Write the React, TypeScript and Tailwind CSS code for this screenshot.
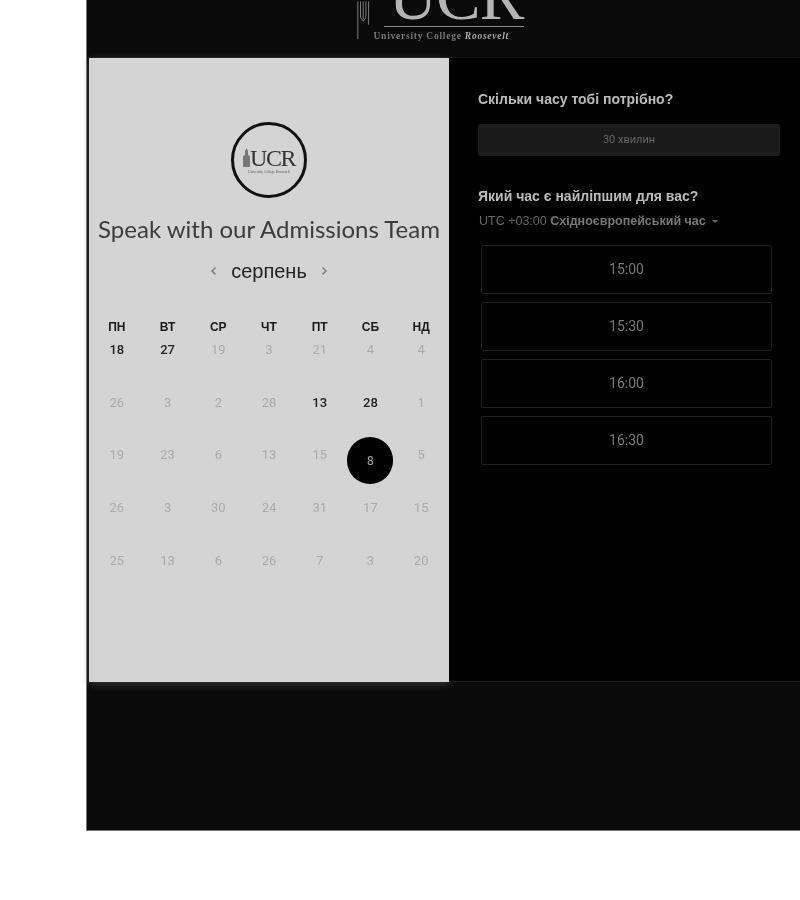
const days: [string, boolean][][] = [
  [["18", true], ["27", true], ["19", false], ["3", false], ["21", false], ["4", false], ["4", false]],
  [["26", false], ["3", false], ["2", false], ["28", false], ["13", true], ["28", true], ["1", false]],
  [["19", false], ["23", false], ["6", false], ["13", false], ["15", false], ["8", false], ["5", false]],
  [["26", false], ["3", false], ["30", false], ["24", false], ["31", false], ["17", false], ["15", false]],
  [["25", false], ["13", false], ["6", false], ["26", false], ["7", false], ["3", false], ["20", false]],
];
const heads = ["ПН", "ВТ", "СР", "ЧТ", "ПТ", "СБ", "НД"];
const times = ["15:00", "15:30", "16:00", "16:30"];

function Tower({ className }: { className: string }) {
  return (
    <svg className={className} viewBox="0 0 20 46" fill="none" stroke="#8a8a8a" strokeWidth="1">
      <path d="M2 0V42M5 0V18M8 0V20M11 0V18M14 0V14M5 18L8 22L11 18M14 14V26" />
    </svg>
  );
}

export default function App() {
  return (
    <div className="h-[900px] w-[800px] overflow-hidden bg-white font-['Liberation_Sans',sans-serif]">
      <div className="ml-[86px] flex h-[831px] w-[714px] flex-col border-b border-l border-[#777] bg-[#0a0a0a] blur-[0.3px]">
        <header className="flex h-[58px] shrink-0 justify-center overflow-hidden border-b border-[#141414]">
          <div className="ml-[-6px] flex h-[44px] w-[170px] shrink-0 items-start">
            <Tower className="mt-0 h-[44px] w-[18px] shrink-0" />
            <div className="flex min-w-0 flex-col">
              <div className="ml-[10px] mt-[-34px] h-[61px] w-[140px] border-b border-[#8a8a8a] text-right font-['Liberation_Serif',serif] text-[67px] leading-[61px] tracking-[-1px] text-[#b4b4b4]">
                UCR
              </div>
              <div className="mt-[3px] whitespace-nowrap font-['Liberation_Serif',serif] text-[9.5px] font-bold leading-[12px] tracking-[0.75px] text-[#777]">
                University College <span className="italic text-[#aaa]">Roosevelt</span>
              </div>
            </div>
          </div>
        </header>
        <main className="flex h-[624px] shrink-0">
          <section className="ml-[2px] flex w-[360px] shrink-0 flex-col items-center bg-[#d4d4d4] shadow-[0_2px_8px_rgba(120,120,120,0.45)]">
            <div className="mt-[64px] flex h-[76px] w-[76px] items-center justify-center rounded-full border-[3px] border-[#111]">
              <div className="flex flex-col items-center">
                <div className="flex items-end">
                  <svg className="mb-[3px] h-[19px] w-[7px]" viewBox="0 0 7 19">
                    <path d="M0 19V8L2 7V3L3.5 0L5 3V7L7 8V19Z" fill="#777" />
                  </svg>
                  <span className="font-['Liberation_Serif',serif] text-[24px] leading-[24px] tracking-[-1.5px] text-[#333]">UCR</span>
                </div>
                <span className="whitespace-nowrap font-['Liberation_Serif',serif] text-[3.5px] leading-[4px] text-[#555]">University College Roosevelt</span>
              </div>
            </div>
            <h1 className="mt-[15px] whitespace-nowrap font-['Lato',sans-serif] text-[24px] leading-[32px] text-[#3c3c3c]">
              Speak with our Admissions Team
            </h1>
            <div className="mt-[13px] flex h-[26px] items-center">
              <svg className="h-[10px] w-[7px]" viewBox="0 0 7 10" fill="none" stroke="#777" strokeWidth="1.4"><path d="M5.5 1.5L2 5L5.5 8.5" /></svg>
              <span className="mx-[14px] text-[20px] leading-[26px] text-[#222]">серпень</span>
              <svg className="h-[10px] w-[7px]" viewBox="0 0 7 10" fill="none" stroke="#777" strokeWidth="1.4"><path d="M1.5 1.5L5 5L1.5 8.5" /></svg>
            </div>
            <div className="mt-[30px] grid w-[355px] grid-cols-7">
              {heads.map((h) => (
                <div key={h} className="h-[26px] text-center text-[12px] font-bold leading-[26px] text-[#1a1a1a]">
                  {h}
                </div>
              ))}
            </div>
            <div className="grid w-[355px] grid-cols-7 font-['Roboto',sans-serif] text-[13px]">
              {days.flat().map(([d, on], i) => (
                <div key={i} className="flex h-[52.7px] items-start justify-center">
                  {i === 19 ? (
                    <span className="mt-[-8px] flex h-[47px] w-[46px] items-center justify-center rounded-full bg-black text-[12px] text-[#aaa]">{d}</span>
                  ) : (
                    <span className={on ? "mt-[0px] font-medium leading-[20px] text-[#222]" : "mt-[0px] leading-[20px] text-[#aaa]"}>{d}</span>
                  )}
                </div>
              ))}
            </div>
          </section>
          <section className="flex min-w-0 flex-1 flex-col border-b border-[#222] bg-black pl-[29px]">
            <h2 className="mt-[31px] text-[14px] font-bold leading-[20px] text-[#bbb]">Скільки часу тобі потрібно?</h2>
            <div className="mt-[15px] flex h-[32px] w-[302px] items-center justify-center rounded-[2px] border border-[#1c1c1c] bg-[#1a1a1a] font-['Roboto',sans-serif] text-[11px] text-[#666]">
              30 хвилин
            </div>
            <h2 className="mt-[30px] text-[14px] font-bold leading-[20px] text-[#bbb]">Який час є найліпшим для вас?</h2>
            <div className="mt-[5px] flex h-[20px] items-center pl-[1px] text-[12.5px] text-[#666]">
              <span>UTC +03:00&nbsp;</span>
              <span className="font-bold text-[#777]">Східноєвропейський час</span>
              <span className="ml-[6px] h-0 w-0 border-x-[3px] border-t-[3px] border-x-transparent border-t-[#666]" />
            </div>
            <div className="mt-[14px] flex w-[291px] flex-col gap-[8px] self-start ml-[3px]">
              {times.map((t) => (
                <div key={t} className="flex h-[49px] items-center justify-center rounded-[2px] border border-[#1e1e1e] bg-black font-['Roboto',sans-serif] text-[14px] text-[#777]">
                  {t}
                </div>
              ))}
            </div>
          </section>
        </main>
      </div>
    </div>
  );
}
